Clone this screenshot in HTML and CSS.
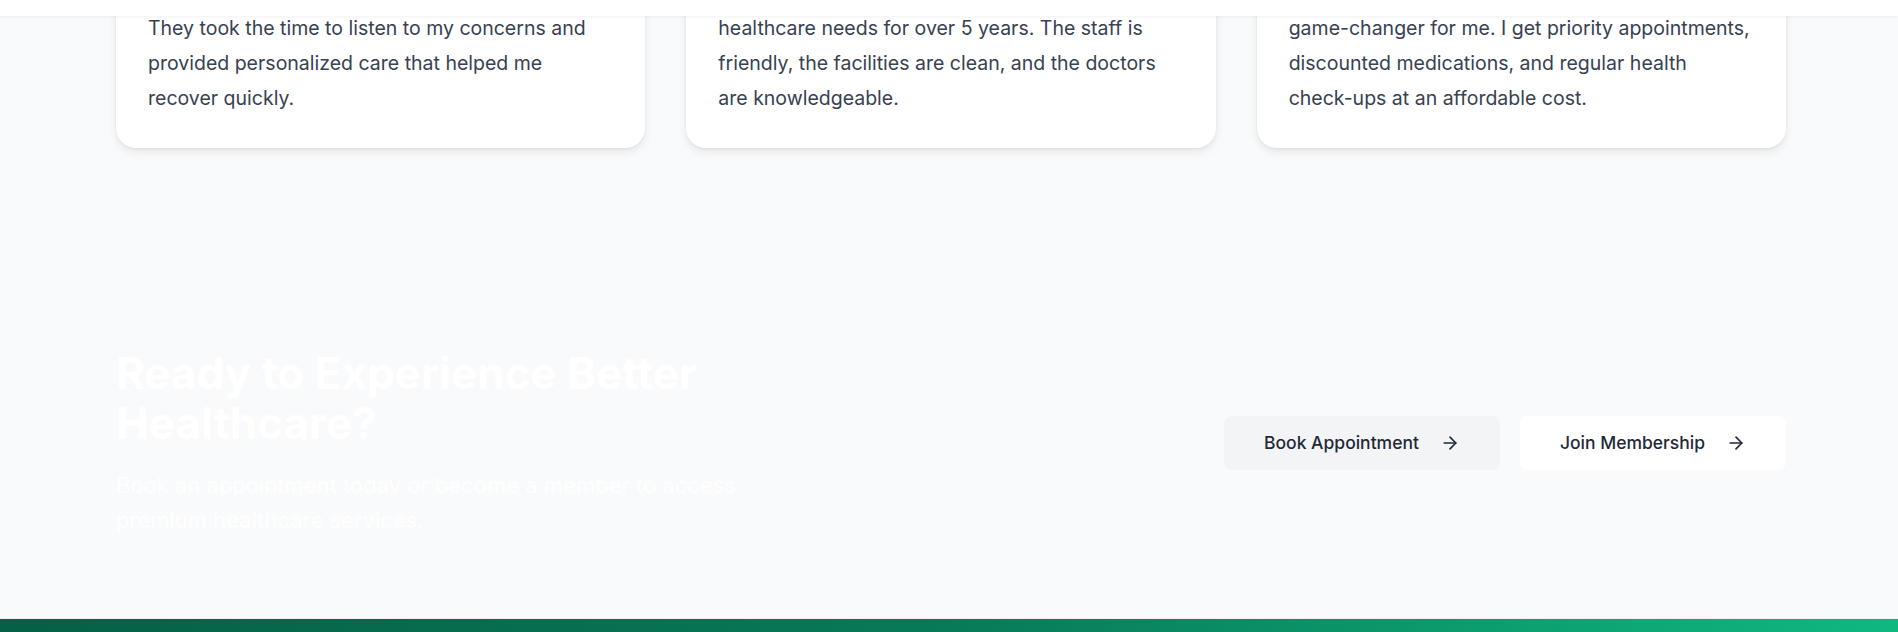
FILE: index.html
```html
<!DOCTYPE html>
<html lang="en">
<head>
<meta charset="utf-8">
<title>Healthcare</title>
<link rel="stylesheet" href="styles.css">
</head>
<body>
<header class="topbar"></header>
<main>
  <section class="testimonials">
    <div class="cards">
      <article class="card">
        <p class="quote">They took the time to listen to my concerns and provided personalized care that helped me recover quickly.</p>
      </article>
      <article class="card">
        <p class="quote">healthcare needs for over 5 years. The staff is friendly, the facilities are clean, and the doctors are knowledgeable.</p>
      </article>
      <article class="card">
        <p class="quote">game-changer for me. I get priority appointments, discounted medications, and regular health check-ups at an affordable cost.</p>
      </article>
    </div>
  </section>
  <section class="cta">
    <div class="cta-text">
      <h2 class="cta-title">Ready to Experience Better Healthcare?</h2>
      <p class="cta-sub">Book an appointment today or become a member to access premium healthcare services.</p>
    </div>
    <div class="cta-actions">
      <a class="btn btn-gray" href="#">Book Appointment
        <svg class="arrow" viewBox="0 0 24 24" width="20" height="20" fill="none" stroke="currentColor" stroke-width="2" stroke-linecap="round" stroke-linejoin="round"><path d="M5 12h14"/><path d="m12 5 7 7-7 7"/></svg>
      </a>
      <a class="btn btn-white" href="#">Join Membership
        <svg class="arrow" viewBox="0 0 24 24" width="20" height="20" fill="none" stroke="currentColor" stroke-width="2" stroke-linecap="round" stroke-linejoin="round"><path d="M5 12h14"/><path d="m12 5 7 7-7 7"/></svg>
      </a>
    </div>
  </section>
</main>
<footer class="footer"></footer>
</body>
</html>
```
FILE: styles.css
```css
* { box-sizing: border-box; }
html, body { margin: 0; padding: 0; }
body {
  background: #f9fafb;
  font-family: Inter, "Noto Sans", sans-serif;
  color: #374151;
  overflow: hidden;
}
.topbar {
  position: fixed;
  top: 0;
  left: 0;
  right: 0;
  height: 16px;
  background: #ffffff;
  box-shadow: 0 1px 3px rgba(0,0,0,0.06);
  z-index: 10;
}
.testimonials {
  margin-top: -21px;
  padding: 0 112px 120px 116px;
}
.cards {
  display: grid;
  grid-template-columns: repeat(3, 1fr);
  gap: 41px;
}
.card {
  background: #ffffff;
  border-radius: 20px;
  padding: 32px;
  box-shadow: 0 4px 10px rgba(0,0,0,0.08), 0 1px 3px rgba(0,0,0,0.05);
}
.quote {
  margin: 0;
  font-size: 19.5px;
  line-height: 35px;
  color: #374151;
}
.cta {
  display: flex;
  align-items: center;
  justify-content: space-between;
  padding: 80px 112px 80px 116px;
}
.cta-text { max-width: 672px; }
.cta-title {
  margin: 0 0 20px;
  font-size: 44px;
  line-height: 50px;
  font-weight: 700;
  color: #ffffff;
}
.cta-sub {
  margin: 0;
  font-size: 22px;
  line-height: 35px;
  color: rgba(255,255,255,0.9);
}
.cta-actions {
  display: flex;
  gap: 20px;
}
.btn {
  display: flex;
  align-items: center;
  gap: 21px;
  padding: 13px 40px;
  border-radius: 8px;
  font-size: 17.5px;
  line-height: 28px;
  font-weight: 500;
  color: #1f2937;
  text-decoration: none;
}
.btn-gray { background: #f3f4f6; }
.btn-white { background: #ffffff; }
.arrow { flex: none; }
.footer {
  height: 100px;
  border-top: 1px solid #eef0f3;
  background: linear-gradient(100deg, #065f46 0%, #087a58 50%, #10b981 100%);
}
```
